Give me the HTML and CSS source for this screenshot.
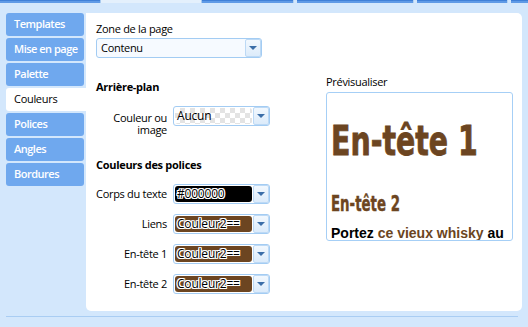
FILE: index.html
```html
<!DOCTYPE html>
<html lang="fr">
<head>
<meta charset="utf-8">
<link rel="stylesheet" href="styles.css">
</head>
<body>
<div class="topstrip">
  <span class="seg blue w100"></span>
  <span class="seg light w101"></span>
  <span class="seg blue w91"></span>
  <span class="seg sep"></span>
  <span class="seg blue w116"></span>
  <span class="seg sep"></span>
  <span class="seg blue w90"></span>
  <span class="seg sep"></span>
  <span class="seg blue grow"></span>
</div>
<div class="layout">
  <ul class="tabs">
    <li class="tab">Templates</li>
    <li class="tab">Mise en page</li>
    <li class="tab">Palette</li>
    <li class="tab active">Couleurs</li>
    <li class="tab">Polices</li>
    <li class="tab">Angles</li>
    <li class="tab">Bordures</li>
  </ul>
  <div class="panel">
    <div class="form">
      <div class="label">Zone de la page</div>
      <div class="select wide">
        <span class="value">Contenu</span>
        <span class="arrow"><span class="tri"></span></span>
      </div>
      <h3 class="section">Arrière-plan</h3>
      <div class="row">
        <div class="rlabel two">Couleur ou<br>image</div>
        <div class="select">
          <span class="swatch checker">Aucun</span>
          <span class="arrow"><span class="tri"></span></span>
        </div>
      </div>
      <h3 class="section fonts">Couleurs des polices</h3>
      <div class="rows">
        <div class="row">
          <div class="rlabel">Corps du texte</div>
          <div class="select">
            <span class="swatch black">#000000</span>
            <span class="arrow"><span class="tri"></span></span>
          </div>
        </div>
        <div class="row">
          <div class="rlabel">Liens</div>
          <div class="select">
            <span class="swatch brown">Couleur2==</span>
            <span class="arrow"><span class="tri"></span></span>
          </div>
        </div>
        <div class="row">
          <div class="rlabel">En-tête 1</div>
          <div class="select">
            <span class="swatch brown">Couleur2==</span>
            <span class="arrow"><span class="tri"></span></span>
          </div>
        </div>
        <div class="row">
          <div class="rlabel">En-tête 2</div>
          <div class="select">
            <span class="swatch brown">Couleur2==</span>
            <span class="arrow"><span class="tri"></span></span>
          </div>
        </div>
      </div>
    </div>
    <div class="preview">
      <div class="label">Prévisualiser</div>
      <div class="pbox">
        <div class="h1"><span>En-tête 1</span></div>
        <div class="h2"><span>En-tête 2</span></div>
        <p class="ptext">Portez <span class="link">ce vieux whisky</span> au juge blond qui fume</p>
      </div>
    </div>
  </div>
</div>
<div class="footline"></div>
</body>
</html>
```
FILE: styles.css
```css
html, body {
  margin: 0;
  padding: 0;
}
body {
  width: 528px;
  height: 327px;
  overflow: hidden;
  background: #d3e7fc;
  font-family: "Open Sans", "Noto Sans", sans-serif;
  font-size: 11px;
  letter-spacing: -0.3px;
  color: #000;
}
.topstrip {
  display: flex;
  height: 3px;
}
.seg {
  display: block;
  height: 3px;
  box-sizing: border-box;
}
.seg.blue {
  background: #5f9ae6;
  border-top: 1px solid #3f80d8;
}
.seg.light {
  background: #e4f0fc;
  border-left: 1px solid #a9cbf0;
  border-right: 1px solid #a9cbf0;
}
.seg.sep {
  width: 4px;
  background: #d3e7fc;
  border-left: 1px solid #b5d2f1;
}
.w100 { width: 100px; }
.w101 { width: 102px; }
.w91 { width: 91px; }
.w116 { width: 116px; }
.w90 { width: 90px; }
.grow { flex: 1; }

.layout {
  display: flex;
  padding: 10px 0 0 6px;
}
.tabs {
  list-style: none;
  margin: 0;
  padding: 0;
  width: 80px;
  display: flex;
  flex-direction: column;
  gap: 2px;
}
.tab {
  width: 78px;
  height: 23px;
  box-sizing: border-box;
  background: #6fa8ee;
  border-radius: 3px;
  color: #fff;
  font-weight: 600;
  letter-spacing: -0.5px;
  padding-left: 8px;
  line-height: 22px;
  white-space: nowrap;
}
.tab.active {
  width: 82px;
  background: #fff;
  color: #000;
  font-weight: 400;
  letter-spacing: -0.3px;
  border-radius: 3px 0 0 3px;
}
.panel {
  width: 436px;
  height: 298px;
  background: #fff;
  border-radius: 0 5px 5px 5px;
  box-sizing: border-box;
  padding: 8px 0 0 10px;
  display: grid;
  grid-template-columns: 230px 187px;
}
.label {
  line-height: 15px;
  white-space: nowrap;
}
.form .label {
  margin-bottom: 2px;
}
.select {
  display: flex;
  width: 97px;
  height: 20px;
  box-sizing: border-box;
  border: 1px solid #a3ccf3;
  border-radius: 3px;
  background: #fff;
  padding: 1px;
  gap: 1px;
}
.select.wide {
  width: 166px;
  background: #f6faff;
  padding: 0 0 0 4px;
}
.value {
  flex: 1;
  line-height: 18px;
}
.arrow {
  width: 16px;
  flex: none;
  box-sizing: border-box;
  border: 1px solid #bcd9f5;
  border-radius: 2px;
  background: linear-gradient(#f2f8fe, #dcebfa);
  display: flex;
  align-items: center;
  justify-content: center;
  margin: -1px -1px -1px 0;
}
.select.wide .arrow {
  margin: 0;
}
.tri {
  width: 0;
  height: 0;
  border-left: 4px solid transparent;
  border-right: 4px solid transparent;
  border-top: 4px solid #3b6ea8;
}
.section {
  margin: 21px 0 0 0;
  font-size: 11px;
  font-weight: 700;
  line-height: 15px;
  white-space: nowrap;
}
.section.fonts {
  margin-top: 21px;
}
.row {
  display: flex;
  align-items: flex-start;
  gap: 6px;
}
.form > .row {
  margin-top: 12px;
}
.rows {
  margin-top: 12px;
  display: flex;
  flex-direction: column;
  gap: 10px;
}
.rlabel {
  width: 71px;
  text-align: right;
  line-height: 20px;
  white-space: nowrap;
}
.rlabel.two {
  line-height: 12px;
  padding-top: 6px;
}
.swatch {
  flex: 1;
  border-radius: 3px;
  font-size: 12px;
  letter-spacing: -0.2px;
  line-height: 16px;
  padding-left: 2px;
  color: #000;
  text-shadow: 1px 0 0 #fff, -1px 0 0 #fff, 0 1px 0 #fff, 0 -1px 0 #fff,
    1px 1px 0 #fff, -1px -1px 0 #fff, 1px -1px 0 #fff, -1px 1px 0 #fff;
  overflow: hidden;
  white-space: nowrap;
}
.swatch.black { background: #000; }
.swatch.brown { background: #6c4521; }
.swatch.checker {
  text-shadow: none;
  background-color: #fff;
  background-image: conic-gradient(#e3e3e3 25%, #fff 0 50%, #e3e3e3 0 75%, #fff 0);
  background-size: 10px 10px;
}
.preview {
  padding-top: 53px;
}
.preview .label {
  margin-bottom: 3px;
}
.pbox {
  height: 149px;
  box-sizing: border-box;
  border: 1px solid #a6cff6;
  border-radius: 3px;
  overflow: hidden;
  padding: 28px 4px 0 4px;
  color: #6c4521;
  letter-spacing: 0;
}
.h1 {
  font-family: "DejaVu Sans Condensed", "DejaVu Sans", sans-serif;
  font-stretch: condensed;
  font-weight: 700;
  font-size: 41px;
  line-height: 41px;
  white-space: nowrap;
  -webkit-text-stroke: 0.8px #6c4521;
}
.h1 span {
  display: inline-block;
  transform: scaleX(0.77);
  transform-origin: left center;
}
.h2 {
  margin-top: 31px;
  font-family: "DejaVu Sans Condensed", "DejaVu Sans", sans-serif;
  font-stretch: condensed;
  font-weight: 700;
  font-size: 21.5px;
  line-height: 22px;
  white-space: nowrap;
  -webkit-text-stroke: 0.4px #6c4521;
}
.h2 span {
  display: inline-block;
  transform: scaleX(0.69);
  transform-origin: left center;
}
.ptext {
  margin: 11px 0 0 0;
  font-family: "Liberation Sans", Arial, sans-serif;
  font-weight: 700;
  font-size: 14px;
  line-height: 15px;
  color: #000;
}
.link {
  color: #6c4521;
}
.footline {
  margin: 5px 10px 0 6px;
  height: 1px;
  background: #a9cdf3;
}
```
